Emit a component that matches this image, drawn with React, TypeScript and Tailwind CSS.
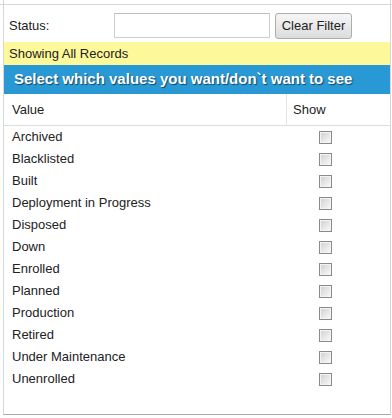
const statuses = [
  "Archived",
  "Blacklisted",
  "Built",
  "Deployment in Progress",
  "Disposed",
  "Down",
  "Enrolled",
  "Planned",
  "Production",
  "Retired",
  "Under Maintenance",
  "Unenrolled",
];

function Checkbox() {
  return (
    <div className="w-[13px] h-[13px] border border-[#8a8a8a] bg-[#f4f4f4] p-px">
      <div className="w-full h-full bg-gradient-to-br from-[#d3d3d3] to-[#f7f7f7]" />
    </div>
  );
}

export default function App() {
  return (
    <div className="w-[392px] h-[418px] bg-white font-['Liberation_Sans',Arial,sans-serif] text-[13px] text-[#222]">
      <div className="ml-[3px] w-[388px] h-[415px] border-x border-x-[#d6d6d6] border-b border-b-[#a8a8a8] flex flex-col">
        <div className="mt-[4px] -ml-[4px] w-[392px] h-px bg-[#d8d8d8]" />

        <div className="h-[37px] flex items-center pt-[4px] pl-[5px]">
          <span className="w-[105px]">Status:</span>
          <input
            type="text"
            className="w-[156px] h-[25px] border border-[#cdcdcd] border-t-[#bdbdbd] bg-white outline-none px-1"
          />
          <button className="ml-[5px] w-[77px] h-[26px] rounded-[3px] border border-[#adadad] bg-gradient-to-b from-[#f6f6f6] to-[#dcdcdc] text-[13px] text-[#222]">
            Clear Filter
          </button>
        </div>

        <div className="h-[23px] bg-[#fdf899] flex items-center pl-[5px]">
          Showing All Records
        </div>

        <div className="h-[29px] bg-[#2899d5] flex items-center pl-[10px] text-white font-bold text-[15px] [text-shadow:1px_1px_1px_rgba(0,0,0,0.55)]">
          Select which values you want/don`t want to see
        </div>

        <div className="h-[32px] flex border-b border-[#dcdcdc]">
          <div className="w-[282px] flex items-center pl-[8px]">Value</div>
          <div className="flex-1 flex items-center pl-[6px] border-l border-[#e4e4e4]">Show</div>
        </div>

        {statuses.map((s) => (
          <div key={s} className="h-[22px] flex items-center">
            <div className="w-[282px] pl-[8px]">{s}</div>
            <div className="pl-[33px]">
              <Checkbox />
            </div>
          </div>
        ))}
      </div>
    </div>
  );
}
